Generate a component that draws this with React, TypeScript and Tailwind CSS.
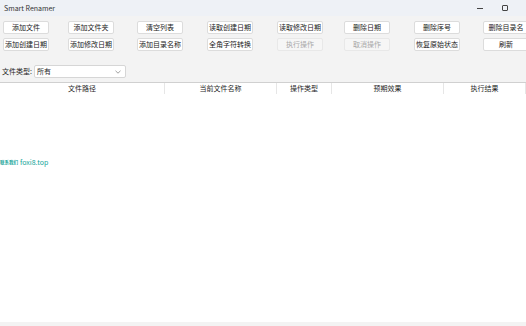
const row1 = ["添加文件", "添加文件夹", "清空列表", "读取创建日期", "读取修改日期", "删除日期", "删除序号", "删除目录名"];
const row2 = ["添加创建日期", "添加修改日期", "添加目录名称", "全角字符转换", "执行操作", "取消操作", "恢复原始状态", "刷新"];
const disabled = ["执行操作", "取消操作"];

const cols = [
  { label: "文件路径", w: "w-[165px]" },
  { label: "当前文件名称", w: "w-[112px]" },
  { label: "操作类型", w: "w-[55px]" },
  { label: "预期效果", w: "w-[112px]" },
  { label: "执行结果", w: "flex-1" },
];

function Btn({ label }: { label: string }) {
  const off = disabled.includes(label);
  return (
    <div
      className={`flex h-[13px] w-[46px] shrink-0 items-center justify-center rounded-[2px] border text-[7px] leading-none ${
        off ? "border-[#e8e8e8] bg-[#f6f6f6] text-[#a8a8a8]" : "border-[#dcdcdc] bg-white text-[#222]"
      }`}
    >
      {label}
    </div>
  );
}

export default function App() {
  return (
    <div
      className="flex h-[326px] w-[526px] flex-col overflow-hidden bg-[#f3f3f3] text-[#1f1f1f]"
      style={{ fontFamily: '"Noto Sans CJK SC", "Noto Sans", sans-serif' }}
    >
      {/* title bar */}
      <div className="flex h-[16px] shrink-0 items-center bg-[#eef1f6] pl-[4px]">
        <span className="text-[7px] text-[#333]">Smart Renamer</span>
        <div className="ml-auto flex items-center gap-[19px] pr-[18px]">
          <div className="h-px w-[6px] bg-[#444]" />
          <div className="h-[6px] w-[6px] rounded-[1px] border border-[#444]" />
        </div>
      </div>

      {/* buttons */}
      <div className="flex flex-col gap-[4px] pl-[3px] pt-[5px]">
        {[row1, row2].map((row, i) => (
          <div key={i} className="grid grid-cols-[65px_69px_70px_70px_67px_70px_69px_46px]">
            {row.map((b) => (
              <Btn key={b} label={b} />
            ))}
          </div>
        ))}
      </div>

      {/* file type */}
      <div className="mt-[14px] flex items-center pl-[2px]">
        <span className="text-[7px]">文件类型:</span>
        <div className="ml-[2px] flex h-[13px] w-[92px] items-center justify-between rounded-[2px] border border-[#d6d6d6] bg-white px-[2px]">
          <span className="text-[7px]">所有</span>
          <svg width="6" height="4" viewBox="0 0 6 4" className="mr-[2px]">
            <path d="M0.5 0.8 L3 3.2 L5.5 0.8" fill="none" stroke="#888" strokeWidth="0.8" />
          </svg>
        </div>
      </div>

      {/* table */}
      <div className="mt-[4px] flex flex-1 flex-col border-t border-[#d0d0d0] bg-white">
        <div className="flex h-[11px] shrink-0">
          {cols.map((c) => (
            <div
              key={c.label}
              className={`${c.w} flex items-center justify-center border-r border-[#e6e6e6] text-[7px] leading-none`}
            >
              {c.label}
            </div>
          ))}
        </div>
        <div className="flex flex-1 flex-col pt-[63px]">
          <div className="flex items-center gap-[2px] text-[#16a59a]">
            <span className="text-[4.5px] font-bold">联系我们</span>
            <span className="text-[7px]">foxi8.top</span>
          </div>
        </div>
        <div className="h-[4px] shrink-0 bg-[#f3f3f3]" />
      </div>
    </div>
  );
}
